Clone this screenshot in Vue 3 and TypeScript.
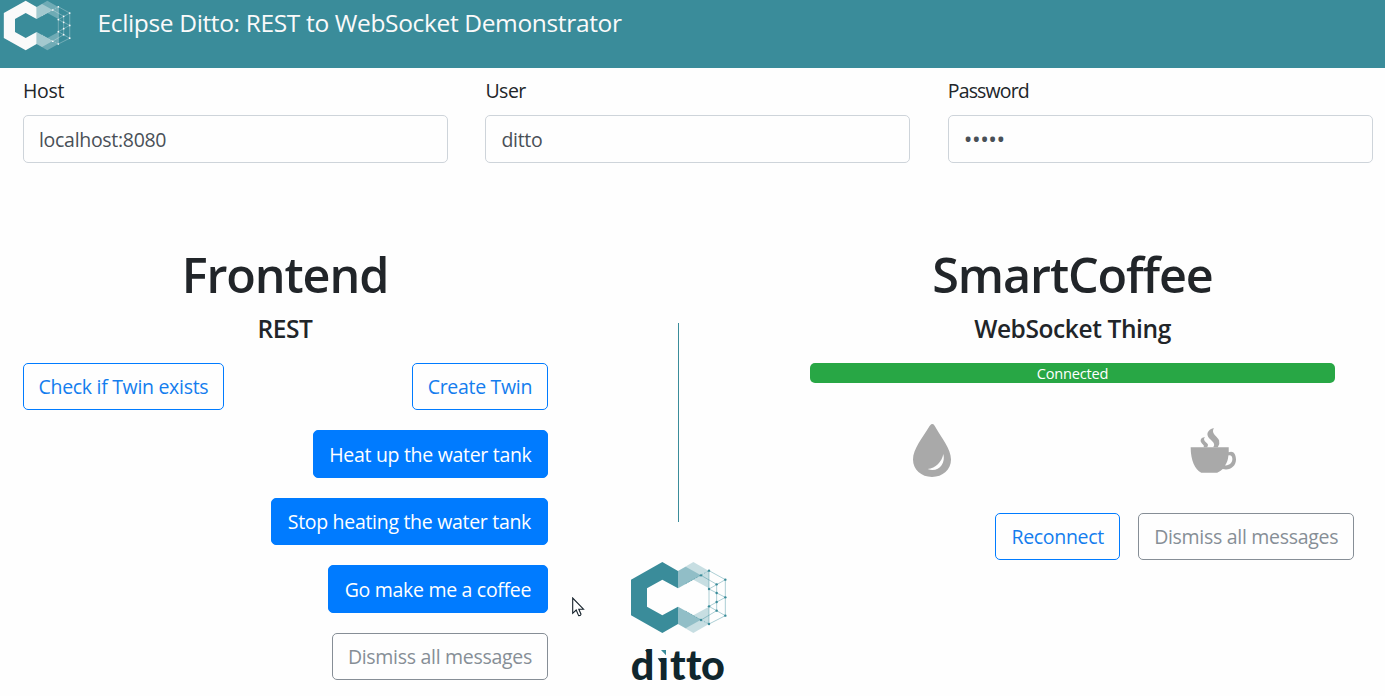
<script setup lang="ts">
import { ref } from 'vue'

interface Action { label: string; kind: string; size: string }

const host = ref('localhost:8080')
const user = ref('ditto')
const password = ref('ditto')

const actions: Action[] = [
  { label: 'Heat up the water tank', kind: 'primary', size: 'heat' },
  { label: 'Stop heating the water tank', kind: 'primary', size: 'stop' },
  { label: 'Go make me a coffee', kind: 'primary', size: 'make' },
  { label: 'Dismiss all messages', kind: 'secondary', size: 'dismiss' },
]

const nodes: [number, number][] = [
  [267, 62], [316, 89], [290, 103], [267, 117], [243, 76], [316, 142], [290, 129],
  [290, 156], [267, 169], [316, 197], [290, 182], [267, 222], [243, 210],
]
</script>

<template>
  <div class="page">
    <svg class="defs" aria-hidden="true">
      <symbol id="ditto-mark" viewBox="30 33 291 219">
        <path fill="currentColor" d="M127 36 174 63V115L127 89 81 115V170L127 196 174 170V222L127 249 33 196V89Z" />
        <path fill="currentColor" opacity=".28" d="M174 63 220 36 267 63V115L220 89 174 115ZM174 170 220 196 267 170V222L220 249 174 222Z" />
        <path fill="currentColor" opacity=".38" d="M174 63 220 89 174 115ZM174 63 197 50 243 76 220 89ZM174 170 220 196 174 222ZM174 222 220 196 243 209 220 222 197 235Z" />
        <path fill="none" stroke="currentColor" stroke-width="2.5" opacity=".5" d="M267 62V222M316 89V197M290 103V182M267 62 316 89 267 117 316 142 267 169 316 197 267 222M243 76 290 103M243 210 290 182" />
        <path fill="none" stroke="currentColor" stroke-width="2.5" stroke-dasharray="5 4" opacity=".5" d="M197 101 267 62M197 183 243 210 267 222" />
        <circle v-for="(n, i) in nodes" :key="i" :cx="n[0]" :cy="n[1]" r="3.6" fill="currentColor" />
      </symbol>
    </svg>

    <header class="navbar">
      <svg class="brand-mark"><use href="#ditto-mark" /></svg>
      <span class="brand">Eclipse Ditto: REST to WebSocket Demonstrator</span>
    </header>

    <form class="settings" @submit.prevent>
      <label class="field"><span>Host</span><input v-model="host" type="text" /></label>
      <label class="field"><span class="user">User</span><input v-model="user" type="text" /></label>
      <label class="field"><span class="pw">Password</span><input v-model="password" type="password" /></label>
    </form>

    <main class="columns">
      <section class="frontend">
        <h1>Frontend</h1>
        <h5>REST</h5>
        <div class="twin-row">
          <button class="btn outline check">Check if Twin exists</button>
          <button class="btn outline create">Create Twin</button>
        </div>
        <button v-for="a in actions" :key="a.label" class="btn" :class="[a.kind, a.size]">{{ a.label }}</button>
      </section>

      <section class="middle">
        <div class="divider"></div>
        <svg class="logo" viewBox="30 33 291 372">
          <defs>
            <linearGradient id="i-fill" gradientUnits="userSpaceOnUse" x1="0" y1="290" x2="0" y2="390">
              <stop offset=".29" stop-color="#3a8c9a" />
              <stop offset=".29" stop-color="#10262d" />
            </linearGradient>
          </defs>
          <use href="#ditto-mark" x="30" y="33" width="291" height="219" />
          <text class="wordmark" x="32 115 150 198 243" y="389">d<tspan fill="url(#i-fill)">i</tspan>tto</text>
          <path fill="#fefefe" d="M110 288H146V320H110Z" />
          <path fill="#3a8c9a" d="M123 300H138V316Z" />
          <path fill="#10262d" d="M75 300H92V312H84ZM113 325H128V336H121Z" />
        </svg>
      </section>

      <section class="thing">
        <h1>SmartCoffee</h1>
        <h5 class="ws">WebSocket Thing</h5>
        <div class="progress"><span>Connected</span></div>
        <div class="icons">
          <svg class="drop" viewBox="69 41 114 161" preserveAspectRatio="none">
            <path fill="#a9a9a9" d="M127 41C132 41 134 47 137 52C155 84 183 117 183 149C183 180 158 202 126 202S69 180 69 149C69 117 98 83 116 52C119 47 122 41 127 41Z" />
            <path fill="#fefefe" d="M160 132C168 163 143 190 113 178C137 174 155 157 160 132Z" />
          </svg>
          <svg class="mug" viewBox="60 53 140 136">
            <path fill="#a9a9a9" d="M61 111H176V126C190 120 198 132 198 148C198 168 180 183 158 177Q151 184 141 188H93C74 178 61 151 61 111ZM175 136C174 149 171 158 165 166C178 167 187 158 187 147C187 139 183 134 175 136Z" />
            <path fill="#a9a9a9" d="M131 53C121 72 143 78 147 91Q150 101 143 111H129C141 97 115 89 112 75C110 64 119 56 131 53ZM104 80C96 91 109 95 113 102Q114 107 111 111H100C105 104 91 101 91 91C91 84 97 81 104 80Z" />
          </svg>
        </div>
        <div class="thing-actions">
          <button class="btn outline reconnect">Reconnect</button>
          <button class="btn secondary dismiss">Dismiss all messages</button>
        </div>
      </section>
    </main>

    <svg class="cursor" viewBox="0 0 13 20">
      <path d="M.7 1V16.3L4.2 13 6.6 18.6Q8.8 18.8 9 17.2L6.8 12.2H11.5Z" fill="#fff" stroke="#14202a" stroke-width="1.1" />
    </svg>
  </div>
</template>

<style>
body { margin: 0; overflow: hidden; background: #fefefe; }
</style>

<style scoped>
.page {
  position: relative;
  box-sizing: border-box;
  width: 1385px;
  height: 696px;
  overflow: hidden;
  background: #fefefe;
  color: #212529;
  font: 19.5px/30px "Open Sans", "Noto Sans", sans-serif;
  letter-spacing: -0.3px;
}
.defs { position: absolute; width: 0; height: 0; }
.navbar { display: flex; height: 68px; background: #3a8c9a; color: #fafafa; }
.brand-mark { width: 68px; height: 51px; margin-left: 3px; flex: none; }
.brand { margin: 8px 0 0 26.5px; font-size: 24.5px; letter-spacing: -0.35px; white-space: nowrap; }
.settings { display: grid; grid-template-columns: repeat(3, 425px); column-gap: 37.4px; padding: 8px 0 0 23px; }
.field { display: flex; flex-direction: column; }
.field span { height: 39px; }
.field .user { letter-spacing: -0.5px; }
.field .pw { letter-spacing: -0.85px; }
.field input {
  box-sizing: border-box; width: 425px; height: 48px; padding: 0 15px; border: 1px solid #ced4da;
  border-radius: 5px; background: #fefefe; color: #495057; font: inherit; letter-spacing: inherit; outline: none;
}
.field input[type="password"] { font-size: 23px; letter-spacing: -0.45px; }
.columns { display: grid; grid-template-columns: 562.5px 225px 562.5px; padding: 79px 0 0 3.75px; }
.frontend, .thing { box-sizing: border-box; padding: 0 18.75px; }
h1, h5 { margin: 0; text-align: center; font-weight: 600; }
h1 { height: 60px; margin-top: 2px; font-size: 48.5px; line-height: 60px; letter-spacing: -1.1px; }
h5 { height: 30px; margin: 10px 0 18.6px; font-size: 24.5px; line-height: 30px; letter-spacing: -0.4px; }
.frontend { display: flex; flex-direction: column; align-items: flex-end; }
.frontend h1, .frontend h5 { width: 100%; }
.twin-row { display: flex; justify-content: space-between; width: 100%; }
.btn {
  box-sizing: border-box; height: 47.5px; margin: 0 0 20px; padding: 1.5px 0 0 .8px; border: 1px solid; border-radius: 5px;
  background: transparent; font: inherit; letter-spacing: inherit; white-space: nowrap; flex: none;
}
.outline { border-color: #007bff; color: #147dee; }
.primary { border-color: #007bff; background: #007bff; color: #fff; }
.secondary { border-color: #868e96; color: #868e96; }
.check { width: 201px; }
.create { width: 136px; }
.heat { width: 235px; }
.stop { width: 277px; }
.make { width: 220px; }
.dismiss { width: 216px; }
.reconnect { width: 125px; }
.middle { display: flex; flex-direction: column; align-items: center; }
.divider { width: 1px; height: 199px; margin: 81px 1px 0 0; background: #3a8c9a; }
.logo { width: 97px; height: 124px; margin: 39px 1px 0 0; overflow: visible; color: #3a8c9a; }
.wordmark { fill: #10262d; font-family: Lato, sans-serif; font-weight: 900; font-size: 124px; letter-spacing: 0; }
.progress { height: 20px; border-radius: 5px; background: #28a745; color: #fff; text-align: center; font-size: 14.6px; line-height: 20px; letter-spacing: -0.2px; }
.icons { display: grid; grid-template-columns: 1fr 1fr; justify-items: center; align-items: center; height: 130px; margin: 0 -18.75px; }
.drop { width: 38px; height: 53px; margin-top: 6px; }
.mug { width: 47px; height: 45px; margin-top: 5px; }
.thing-actions { display: flex; justify-content: flex-end; gap: 18px; margin-right: -18.75px; }
.cursor { position: absolute; left: 572px; top: 597px; width: 13px; height: 20px; }
</style>
